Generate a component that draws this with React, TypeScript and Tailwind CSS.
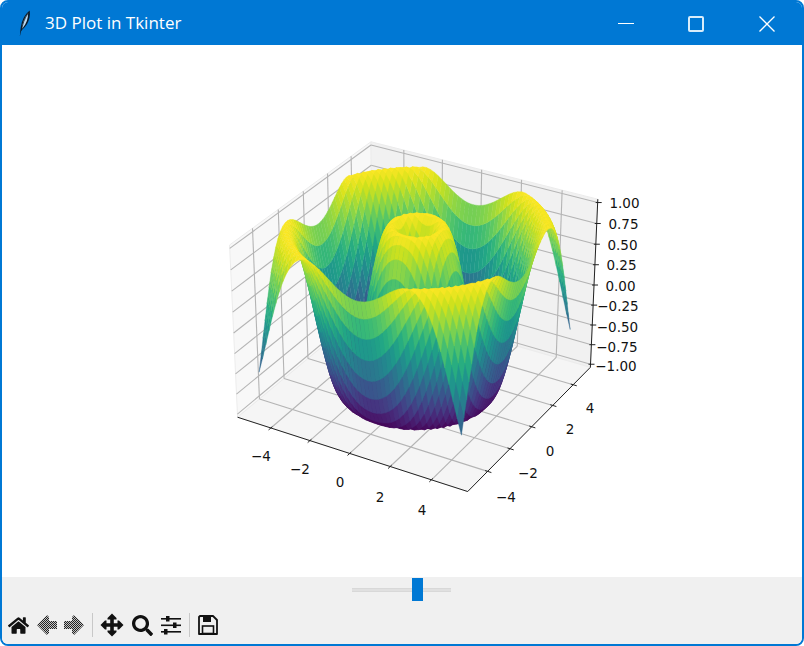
import React from "react";
import { FaHome, FaSearch } from "react-icons/fa";

type V3 = [number, number, number];
type V2 = [number, number];

const L = 5.73;
const Z = 1.04;
const FREQ = 1.41;
const CELLS = 50;

// same camera as a default mplot3d axes (elev 30, azim -60, box 4:4:3)
const box: V3 = [1.143, 1.143, 0.857];
const elev = (30 * Math.PI) / 180;
const azim = (-60 * Math.PI) / 180;
const dir: V3 = [Math.cos(elev) * Math.cos(azim), Math.cos(elev) * Math.sin(azim), Math.sin(elev)];
const uLen = Math.hypot(dir[1], dir[0]);
const u: V3 = [-dir[1] / uLen, dir[0] / uLen, 0];
const v: V3 = [
  dir[1] * u[2] - dir[2] * u[1],
  dir[2] * u[0] - dir[0] * u[2],
  dir[0] * u[1] - dir[1] * u[0],
];
const dot = (a: V3, b: V3) => a[0] * b[0] + a[1] * b[1] + a[2] * b[2];

const camera = (x: number, y: number, z: number) => {
  const p: V3 = [((x / L) * box[0]) / 2, ((y / L) * box[1]) / 2, ((z / Z) * box[2]) / 2];
  const depth = 10 - dot(p, dir);
  return { nx: dot(p, u) / depth, ny: dot(p, v) / depth, depth };
};

// corners of the axes box as they sit in the screenshot
const anchors: [V3, V2][] = [
  [[-L, -L, -Z], [237, 417]],
  [[L, -L, -Z], [468, 492]],
  [[L, L, -Z], [590, 366]],
  [[L, L, Z], [598, 199]],
  [[-L, -L, Z], [230, 247]],
  [[-L, L, Z], [371, 141]],
];

const fit = (pairs: [number, number][]) => {
  const n = pairs.length;
  const mx = pairs.reduce((s, p) => s + p[0], 0) / n;
  const my = pairs.reduce((s, p) => s + p[1], 0) / n;
  const sxy = pairs.reduce((s, p) => s + (p[0] - mx) * (p[1] - my), 0);
  const sxx = pairs.reduce((s, p) => s + (p[0] - mx) ** 2, 0);
  const k = sxy / sxx;
  return [k, my - k * mx];
};
const fitX = fit(anchors.map(([p, s]) => [camera(p[0], p[1], p[2]).nx, s[0]]));
const fitY = fit(anchors.map(([p, s]) => [camera(p[0], p[1], p[2]).ny, s[1]]));

const project = (x: number, y: number, z: number): V2 => {
  const c = camera(x, y, z);
  return [fitX[0] * c.nx + fitX[1], fitY[0] * c.ny + fitY[1]];
};

const viridis = [
  "#440154", "#481a6c", "#472f7d", "#414487", "#39568c", "#31688e", "#2a788e", "#23888e",
  "#1f988b", "#22a884", "#35b779", "#54c568", "#7ad151", "#a5db36", "#d2e21b", "#fde725",
];
const hexRgb = (h: string) => [1, 3, 5].map((i) => parseInt(h.slice(i, i + 2), 16));
const colorAt = (t: number) => {
  const s = Math.min(Math.max(t, 0), 1) * (viridis.length - 1);
  const i = Math.min(Math.floor(s), viridis.length - 2);
  const a = hexRgb(viridis[i]);
  const b = hexRgb(viridis[i + 1]);
  const c = a.map((n, k) => Math.round(n + (b[k] - n) * (s - i)));
  return `rgb(${c[0]},${c[1]},${c[2]})`;
};

const height = (x: number, y: number) => Math.sin(FREQ * Math.hypot(x, y));

const buildSurface = () => {
  const cells: { pts: string; fill: string; depth: number }[] = [];
  const step = 10 / CELLS;
  for (let i = 0; i < CELLS; i++) {
    for (let j = 0; j < CELLS; j++) {
      const x0 = -5 + i * step;
      const y0 = -5 + j * step;
      const corners: V2[] = [[x0, y0], [x0 + step, y0], [x0 + step, y0 + step], [x0, y0 + step]];
      const zs = corners.map(([x, y]) => height(x, y));
      const avg = zs.reduce((s, n) => s + n, 0) / 4;
      const depth = corners.reduce((s, [x, y], k) => s + camera(x, y, zs[k]).depth, 0) / 4;
      const pts = corners
        .map(([x, y], k) => project(x, y, zs[k]).map((n) => n.toFixed(1)).join(","))
        .join(" ");
      cells.push({ pts, fill: colorAt((avg + 1) / 2), depth });
    }
  }
  return cells.sort((a, b) => b.depth - a.depth);
};
const surface = buildSurface();

const quad = (a: V3, b: V3, c: V3, d: V3) =>
  [a, b, c, d].map((p) => project(p[0], p[1], p[2]).join(",")).join(" ");

const Seg = ({ a, b, color, w }: { a: V3; b: V3; color: string; w: number }) => {
  const p = project(a[0], a[1], a[2]);
  const q = project(b[0], b[1], b[2]);
  return <line x1={p[0]} y1={p[1]} x2={q[0]} y2={q[1]} stroke={color} strokeWidth={w} />;
};

const xyTicks = [-4, -2, 0, 2, 4];
const zTicks = [-1, -0.75, -0.5, -0.25, 0, 0.25, 0.5, 0.75, 1];
const xLabels: [string, number, number][] = [
  ["−4", 261, 456], ["−2", 300, 469], ["0", 340, 482], ["2", 380, 497], ["4", 422, 510],
];
const yLabels: [string, number, number][] = [
  ["4", 590, 408], ["2", 570, 429], ["0", 550, 451], ["−2", 528, 473], ["−4", 506, 497],
];
const zLabels: [string, number, number][] = [
  ["1.00", 624.5, 203], ["0.75", 623.5, 224], ["0.50", 622.5, 245], ["0.25", 621.5, 265],
  ["0.00", 620.5, 286], ["−0.25", 618, 306], ["−0.50", 617.5, 327], ["−0.75", 617, 347],
  ["−1.00", 616, 366],
];

const Plot = () => (
  <svg viewBox="2 45 800 532" className="w-[800px] h-[532px] block">
    <polygon points={quad([-L, -L, -Z], [-L, L, -Z], [-L, L, Z], [-L, -L, Z])} fill="#f8f8f8" stroke="#ececec" />
    <polygon points={quad([-L, L, -Z], [L, L, -Z], [L, L, Z], [-L, L, Z])} fill="#f1f1f1" stroke="#ececec" />
    <polygon points={quad([-L, -L, -Z], [L, -L, -Z], [L, L, -Z], [-L, L, -Z])} fill="#f5f5f5" stroke="#ececec" />
    {xyTicks.map((t) => (
      <g key={t}>
        <Seg a={[t, -L, -Z]} b={[t, L, -Z]} color="#b4b4b4" w={1.1} />
        <Seg a={[t, L, -Z]} b={[t, L, Z]} color="#b4b4b4" w={1.1} />
        <Seg a={[-L, t, -Z]} b={[L, t, -Z]} color="#b4b4b4" w={1.1} />
        <Seg a={[-L, t, -Z]} b={[-L, t, Z]} color="#b4b4b4" w={1.1} />
      </g>
    ))}
    {zTicks.map((t) => (
      <g key={t}>
        <Seg a={[-L, -L, t]} b={[-L, L, t]} color="#b4b4b4" w={1.1} />
        <Seg a={[-L, L, t]} b={[L, L, t]} color="#b4b4b4" w={1.1} />
      </g>
    ))}
    {surface.map((c, i) => (
      <polygon key={i} points={c.pts} fill={c.fill} stroke={c.fill} strokeWidth={0.4} />
    ))}
    <Seg a={[-L, -L, -Z]} b={[L, -L, -Z]} color="#222" w={1} />
    <Seg a={[L, -L, -Z]} b={[L, L, -Z]} color="#222" w={1} />
    <Seg a={[L, L, -Z]} b={[L, L, Z]} color="#222" w={1} />
    {xyTicks.map((t) => (
      <g key={t}>
        <Seg a={[t, -L + 0.12, -Z]} b={[t, -L - 0.18, -Z]} color="#222" w={1} />
        <Seg a={[L - 0.12, t, -Z]} b={[L + 0.18, t, -Z]} color="#222" w={1} />
      </g>
    ))}
    {zTicks.map((t) => {
      const p = project(L, L, t);
      return <line key={t} x1={p[0] - 2} y1={p[1]} x2={p[0] + 4} y2={p[1]} stroke="#222" strokeWidth={1} />;
    })}
    <g fontFamily="'DejaVu Sans', sans-serif" fontSize="13.5" fill="#111" textAnchor="middle">
      {[...xLabels, ...yLabels, ...zLabels].map(([s, x, y], i) => (
        <text key={i} x={x} y={y + 5}>
          {s}
        </text>
      ))}
    </g>
  </svg>
);

const Feather = () => (
  <svg width="13" height="27" viewBox="0 0 12 26" className="block">
    <path d="M1.5 25.5 C2 19 2.5 13 5 8 C6.5 5 9 2 11 0.5 C11.8 5 10.5 10 8.5 13.5 C7 16 5 18 3 19.5 Z" fill="#0a1a2a" />
    <path d="M3.5 18 C4 13 6 7 9.5 3 C9.5 8 8 13 4.5 17 Z" fill="#bcd8ee" />
    <path d="M3 20 C4 14 6 8 9.5 3" stroke="#0a1a2a" strokeWidth="0.7" fill="none" />
  </svg>
);

const ArrowIcon = ({ flip }: { flip?: boolean }) => (
  <svg width="22" height="22" viewBox="0 0 22 22" className="block">
    <defs>
      <pattern id={flip ? "ditherR" : "ditherL"} width="2" height="2" patternUnits="userSpaceOnUse">
        <rect width="2" height="2" fill="#c4c4c4" />
        <rect width="1" height="1" fill="#222" />
        <rect x="1" y="1" width="1" height="1" fill="#222" />
      </pattern>
    </defs>
    <path
      transform={flip ? "matrix(-1 0 0 1 22 0)" : undefined}
      d="M1 11 L11 1 L13 3 L13 7 L21 7 L21 15 L13 15 L13 19 L11 21 Z"
      fill={flip ? "url(#ditherR)" : "url(#ditherL)"}
    />
  </svg>
);

const MoveIcon = () => (
  <svg width="24" height="24" viewBox="0 0 24 24" className="block">
    <path
      fill="#111"
      d="M12 0.5 L16.5 5 L16.5 6.5 L13.8 6.5 L13.8 10.2 L17.5 10.2 L17.5 7.5 L19 7.5 L23.5 12 L19 16.5 L17.5 16.5 L17.5 13.8 L13.8 13.8 L13.8 17.5 L16.5 17.5 L16.5 19 L12 23.5 L7.5 19 L7.5 17.5 L10.2 17.5 L10.2 13.8 L6.5 13.8 L6.5 16.5 L5 16.5 L0.5 12 L5 7.5 L6.5 7.5 L6.5 10.2 L10.2 10.2 L10.2 6.5 L7.5 6.5 L7.5 5 Z"
    />
  </svg>
);

const SlidersIcon = () => (
  <svg width="22" height="20" viewBox="0 0 22 20" className="block" fill="#111">
    <rect x="1" y="3" width="20" height="1.6" />
    <rect x="1" y="9.5" width="20" height="1.6" />
    <rect x="1" y="16" width="20" height="1.6" />
    <rect x="6" y="1" width="3.5" height="5.5" />
    <rect x="13" y="7.5" width="3.5" height="5.5" />
    <rect x="4" y="14" width="3.5" height="5.5" />
  </svg>
);

const SaveIcon = () => (
  <svg width="20" height="20" viewBox="0 0 20 20" className="block">
    <path d="M2 1 H15 L19 5 V19 H1 V2 Z" fill="none" stroke="#111" strokeWidth="1.8" strokeLinejoin="round" />
    <rect x="5" y="1" width="8" height="6" fill="#111" />
    <rect x="4.5" y="11" width="11" height="7.5" fill="none" stroke="#111" strokeWidth="1.6" />
  </svg>
);

const ToolButton = ({ children, className }: { children: React.ReactNode; className?: string }) => (
  <div className={`w-[24px] h-[24px] flex items-center justify-center ${className ?? ""}`}>{children}</div>
);

export default function App() {
  return (
    <div className="w-[804px] h-[646px] bg-white overflow-hidden">
      <div className="w-full h-full flex flex-col rounded-[8px] border-2 border-[#0078d4] overflow-hidden">
        <div className="h-[43px] shrink-0 -mt-[2px] box-content pt-[2px] bg-[#0078d4] flex items-center text-white">
          <div className="ml-[16px] w-[13px] flex justify-center">
            <Feather />
          </div>
          <span className="ml-[14px] mb-[2px] text-[17px] font-['Open_Sans',sans-serif]">3D Plot in Tkinter</span>
          <div className="ml-auto flex items-center">
            <div className="w-[70px] h-[43px] flex items-center justify-center">
              <div className="w-[16px] h-[1px] bg-white" />
            </div>
            <div className="w-[70px] h-[43px] flex items-center justify-center mr-[1px]">
              <div className="w-[16px] h-[16px] border-[2px] border-[#d8ecfa] rounded-[2px]" />
            </div>
            <div className="w-[70px] h-[43px] flex items-center justify-center">
              <svg width="16" height="16" viewBox="0 0 16 16" stroke="white" strokeWidth="1.3">
                <path d="M0.5 0.5 L15.5 15.5 M15.5 0.5 L0.5 15.5" />
              </svg>
            </div>
          </div>
        </div>
        <div className="h-[532px] shrink-0 bg-white">
          <Plot />
        </div>
        <div className="flex-1 bg-[#f0f0f0] flex flex-col">
          <div className="h-[25px] flex items-center justify-center">
            <div className="flex items-center mr-[2px]">
              <div className="w-[60px] h-[4px] bg-[#e0e0e0] border-y border-[#d8d8d8]" />
              <div className="w-[11px] h-[23px] bg-[#0078d4]" />
              <div className="w-[28px] h-[4px] bg-[#e0e0e0] border-y border-[#d8d8d8]" />
            </div>
          </div>
          <div className="flex items-center mt-[11px] pl-[4px]">
            <ToolButton>
              <FaHome size={21} color="#111" />
            </ToolButton>
            <ToolButton className="ml-[5px]">
              <ArrowIcon />
            </ToolButton>
            <ToolButton className="ml-[3px]">
              <ArrowIcon flip />
            </ToolButton>
            <div className="w-[1px] h-[24px] bg-[#c8c8c8] ml-[6px]" />
            <ToolButton className="ml-[7px]">
              <MoveIcon />
            </ToolButton>
            <ToolButton className="ml-[6px]">
              <FaSearch size={21} color="#111" />
            </ToolButton>
            <ToolButton className="ml-[5px]">
              <SlidersIcon />
            </ToolButton>
            <div className="w-[1px] h-[24px] bg-[#c8c8c8] ml-[6px]" />
            <ToolButton className="ml-[6px]">
              <SaveIcon />
            </ToolButton>
          </div>
        </div>
      </div>
    </div>
  );
}
